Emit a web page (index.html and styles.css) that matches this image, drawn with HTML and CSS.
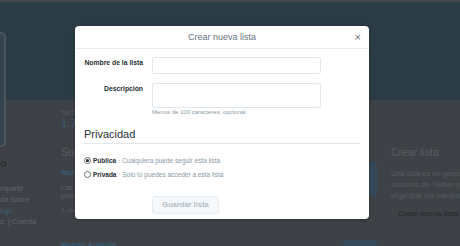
FILE: index.html
```html
<!DOCTYPE html>
<html lang="es">
<head>
<meta charset="utf-8">
<title>Crear nueva lista</title>
<link rel="stylesheet" href="styles.css">
</head>
<body>
<div class="page">
  <div class="topbar"></div>
  <div class="hero"><div class="avatar"></div></div>
  <div class="main">
    <aside class="side">
      <div class="name">o</div>
      <p class="bio">mpartir<br>da sobre<br><span class="lnk">ogs.</span><br>s. | Cuenta</p>
    </aside>
    <section class="center">
      <div class="stat"><span class="stat-l">TWITS</span><span class="stat-v">1.780</span></div>
      <h2 class="sub">Suscrito a</h2>
      <div class="item">
        <div class="item-txt">
          <div class="item-name">Mundo</div>
          <p class="item-desc">Las<br>proc</p>
          <div class="item-meta">3 miembros</div>
        </div>
        <div class="item-btn"></div>
      </div>
      <div class="item item-2">
        <div class="item-txt"><div class="item-name">Mundo Android</div></div>
        <div class="item-btn"></div>
      </div>
    </section>
    <aside class="right">
      <h2 class="r-title">Crear lista</h2>
      <p class="r-text">Una lista es un grupo de<br>usuarios de Twitter para<br>organizar tus intereses.</p>
      <div class="r-btn">Crear nueva lista</div>
    </aside>
  </div>
</div>

<div class="modal">
  <div class="modal-head">
    <h3 class="modal-title">Crear nueva lista</h3>
    <span class="close">&times;</span>
  </div>
  <div class="modal-body">
    <div class="field">
      <label class="f-label">Nombre de la lista</label>
      <div class="f-control"><div class="input"></div></div>
    </div>
    <div class="field">
      <label class="f-label">Descripción</label>
      <div class="f-control">
        <div class="textarea"></div>
        <p class="help">Menos de 100 caracteres, opcional</p>
      </div>
    </div>
    <h4 class="section">Privacidad</h4>
    <div class="radio"><span class="dot on"></span><b>Pública</b><span class="hint"> · Cualquiera puede seguir esta lista</span></div>
    <div class="radio"><span class="dot"></span><b>Privada</b><span class="hint"> · Solo tú puedes acceder a esta lista</span></div>
    <div class="actions"><span class="save">Guardar lista</span></div>
  </div>
</div>
</body>
</html>
```
FILE: styles.css
```css
* { box-sizing: border-box; }
html, body { margin: 0; padding: 0; }
body {
  width: 460px;
  height: 246px;
  overflow: hidden;
  background: #3e4247;
  font-family: "Liberation Sans", Arial, sans-serif;
  position: relative;
}
p, h2, h3, h4 { margin: 0; font-weight: normal; }

.topbar { height: 2px; background: #45484b; }
.hero { height: 98px; background: #2c3c46; position: relative; }
.avatar {
  position: absolute;
  left: -60px; top: 30px;
  width: 66px; height: 115px;
  border: 2px solid #4a555c;
  border-radius: 5px;
  background: #34444e;
}

.main { display: flex; }
.side { flex: 0 0 61px; padding-top: 57px; color: #5d6267; font-size: 7px; }
.name { font-size: 11px; font-weight: bold; color: #2b2f33; line-height: 12px; }
.bio { margin-top: 14px; line-height: 11px; font-size: 7.5px; }
.lnk { color: #3d5d74; }

.center { flex: 0 0 316px; padding-top: 10px; }
.stat { display: flex; flex-direction: column; }
.stat-l { font-size: 5px; color: #565b60; letter-spacing: 0.3px; line-height: 7px; }
.stat-v { font-size: 11px; color: #3a5e78; line-height: 12px; }
.sub { margin-top: 17px; font-size: 11px; color: #575c61; line-height: 13px; }
.item { display: flex; margin-top: 8px; }
.item-txt { flex: 1; }
.item-name { font-size: 7.5px; font-weight: bold; color: #385a74; line-height: 11px; }
.item-desc { margin-top: 6px; font-size: 7px; color: #5a5f64; line-height: 7.5px; }
.item-meta { margin-top: 7px; font-size: 6px; color: #555a5f; line-height: 8px; }
.item-btn { width: 47px; height: 34px; margin-top: -5px; background: #34495a; border-radius: 3px; }
.item-2 { margin-top: 25px; }
.item-2 .item-btn { height: 20px; width: 34px; margin-top: 1px; }

.right { flex: 0 0 120px; padding-left: 14px; padding-top: 46px; }
.r-title { font-size: 10.5px; color: #575c61; line-height: 13px; }
.r-text { margin-top: 9px; font-size: 7.5px; color: #555a5f; line-height: 11px; white-space: nowrap; }
.r-btn { margin-top: 8px; margin-left: 7px; font-size: 7.5px; font-weight: bold; color: #2a2e32; line-height: 10px; white-space: nowrap; }

/* modal */
.modal {
  position: absolute;
  left: 75px; top: 26px;
  width: 294px; height: 193px;
  background: #fff;
  border-radius: 4px;
  box-shadow: 0 1px 4px rgba(0,0,0,0.25);
}
.modal-head {
  height: 23px;
  border-bottom: 1px solid #e8eef2;
  display: flex;
  align-items: center;
  justify-content: center;
  position: relative;
}
.modal-title { font-size: 9px; color: #66757f; line-height: 11px; }
.close {
  position: absolute;
  right: 8px; top: 4px;
  font-size: 11px;
  line-height: 14px;
  color: #66757f;
}
.modal-body { padding: 8px 9px 9px; }
.field {
  display: grid;
  grid-template-columns: 59px 169px;
  column-gap: 9px;
  margin-bottom: 9px;
}
.f-label {
  justify-self: end;
  text-align: right;
  white-space: nowrap;
  font-size: 6.8px;
  font-weight: bold;
  color: #292f33;
  line-height: 9px;
  padding-top: 1px;
}
.input, .textarea {
  height: 17px;
  border: 1px solid #e1e8ed;
  border-radius: 2px;
  background: #fff;
}
.textarea { height: 25px; }
.help { font-size: 6px; color: #8899a6; line-height: 7px; margin-top: 1px; }
.field + .field { margin-bottom: 0; }
.section {
  margin-top: 12px;
  font-size: 11px;
  line-height: 13px;
  color: #292f33;
  padding-bottom: 2px;
  border-bottom: 1px solid #e1e8ed;
}
.radio {
  display: flex;
  align-items: center;
  height: 10px;
  margin-top: 11px;
  font-size: 6.5px;
  color: #292f33;
  white-space: pre;
}
.radio + .radio { margin-top: 4px; }
.radio b { font-weight: bold; }
.dot {
  width: 7px; height: 7px;
  border: 1px solid #6a6f73;
  border-radius: 50%;
  margin-right: 2px;
  position: relative;
  background: #fff;
}
.dot.on::after {
  content: "";
  position: absolute;
  left: 1px; top: 1px;
  width: 3px; height: 3px;
  border-radius: 50%;
  background: #222;
}
.hint { color: #8899a6; font-size: 6.5px; }
.actions { margin-top: 14px; padding-left: 68px; }
.save {
  display: inline-flex;
  align-items: center;
  justify-content: center;
  width: 67px; height: 18px;
  background: #f5f8fa;
  border: 1px solid #e6ecf0;
  border-radius: 3px;
  font-size: 7.5px;
  font-weight: bold;
  color: #b1bec6;
}
```
